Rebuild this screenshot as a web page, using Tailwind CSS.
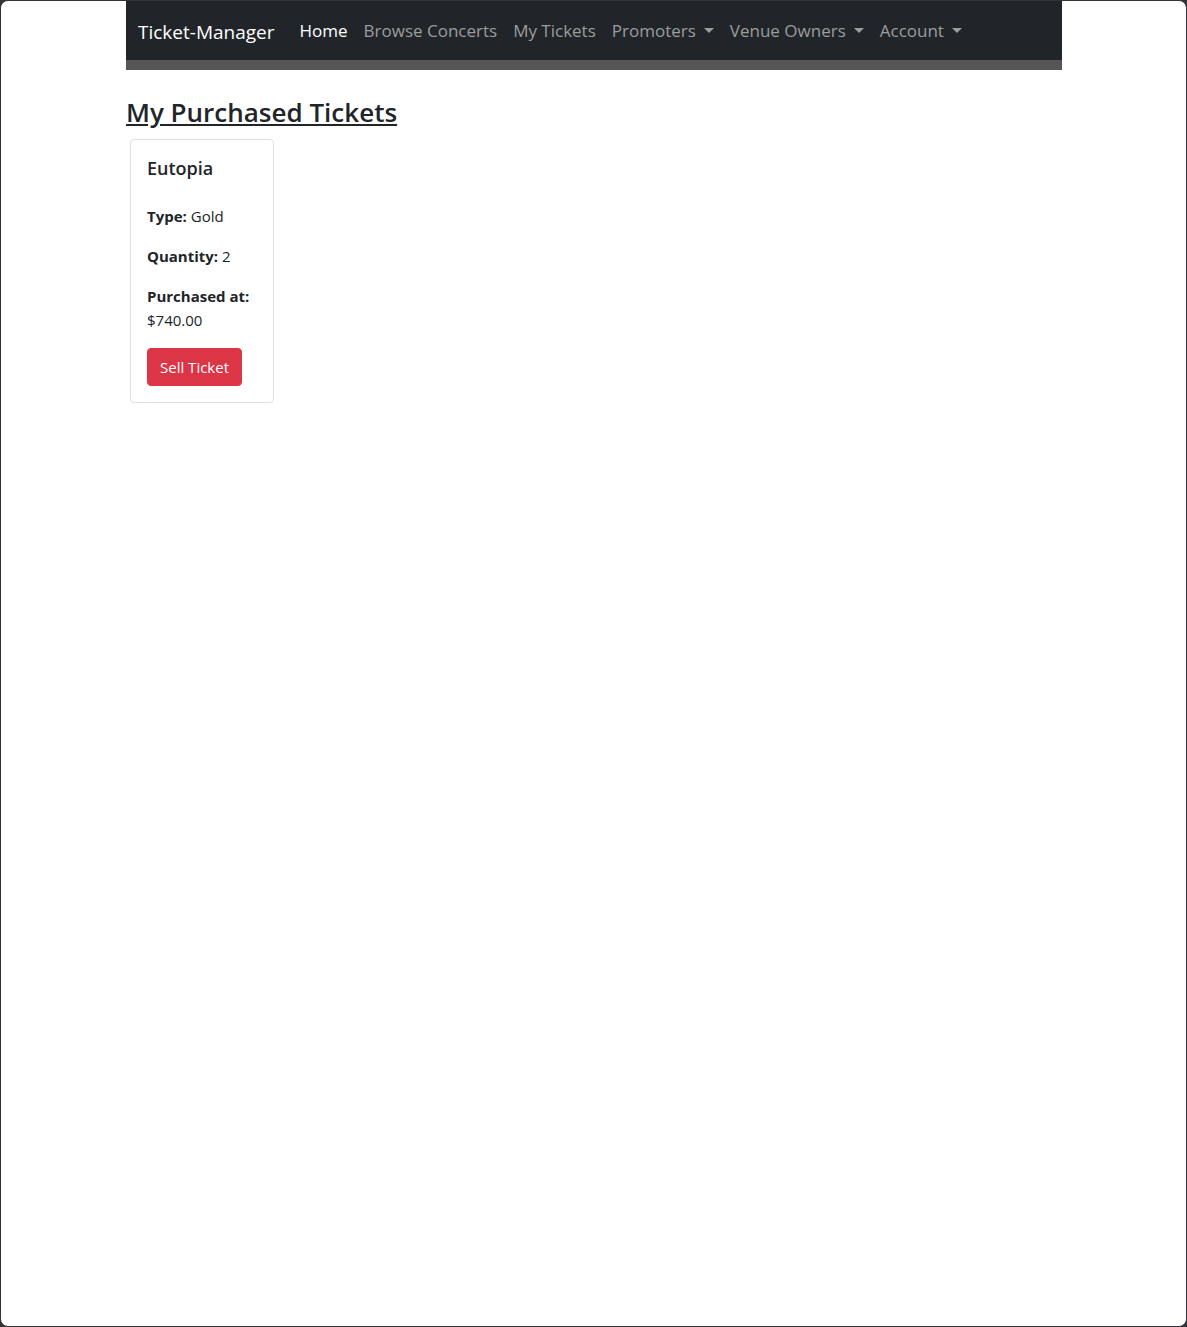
<!DOCTYPE html>
<html lang="en">

<head>
  <meta charset="UTF-8" />
  <meta name="viewport" content="width=device-width, initial-scale=1" />
  <title>Ticket-Manager</title>
  <script src="https://cdn.jsdelivr.net/npm/@tailwindcss/browser@4"></script>
</head>

<body class="bg-[#333236] font-['Open_Sans','Noto_Sans',sans-serif] text-[15px] leading-6 text-[#212529]">
  <div class="min-h-screen rounded-lg border border-[#333236] bg-white">
    <div class="pl-[125px] pr-[124px]">

      <!-- Navbar -->
      <nav class="flex items-center border-b-10 border-[#555555] bg-[#212529] px-3 py-2">
        <a href="#" class="mr-[17px] pt-2 pb-1 text-[19px] leading-[31px] text-white">Ticket-Manager</a>
        <ul class="flex text-[17px] leading-[27px] text-[#9b9d9e]">
          <li><a href="#" class="block px-2 py-2 text-white">Home</a></li>
          <li><a href="#" class="block px-2 py-2">Browse Concerts</a></li>
          <li><a href="#" class="block px-2 py-2">My Tickets</a></li>
          <li>
            <button type="button" class="flex items-center gap-2 px-2 py-2">
              Promoters
              <span class="border-x-5 border-t-5 border-x-transparent border-t-[#9b9d9e]"></span>
            </button>
          </li>
          <li>
            <button type="button" class="flex items-center gap-2 px-2 py-2">
              Venue Owners
              <span class="border-x-5 border-t-5 border-x-transparent border-t-[#9b9d9e]"></span>
            </button>
          </li>
          <li>
            <button type="button" class="flex items-center gap-2 px-2 py-2">
              Account
              <span class="border-x-5 border-t-5 border-x-transparent border-t-[#9b9d9e]"></span>
            </button>
          </li>
        </ul>
      </nav>

      <!-- Purchased tickets -->
      <main class="pt-6">
        <h3 class="mb-[9px] text-[26px] leading-9 font-semibold underline">My Purchased Tickets</h3>
        <div class="flex flex-wrap px-1">
          <div class="w-36 rounded border border-[#dfdfdf] bg-white p-4">
            <h5 class="mb-6 text-[18px] leading-6 font-semibold">Eutopia</h5>
            <p class="mb-4"><b>Type:</b> Gold</p>
            <p class="mb-4"><b>Quantity:</b> 2</p>
            <p class="mb-4"><b>Purchased at:</b> $740.00</p>
            <button type="button" class="block rounded border border-[#dc3545] bg-[#dc3545] px-3 py-[6px] text-white">Sell Ticket</button>
          </div>
        </div>
      </main>
    </div>
  </div>
</body>

</html>
